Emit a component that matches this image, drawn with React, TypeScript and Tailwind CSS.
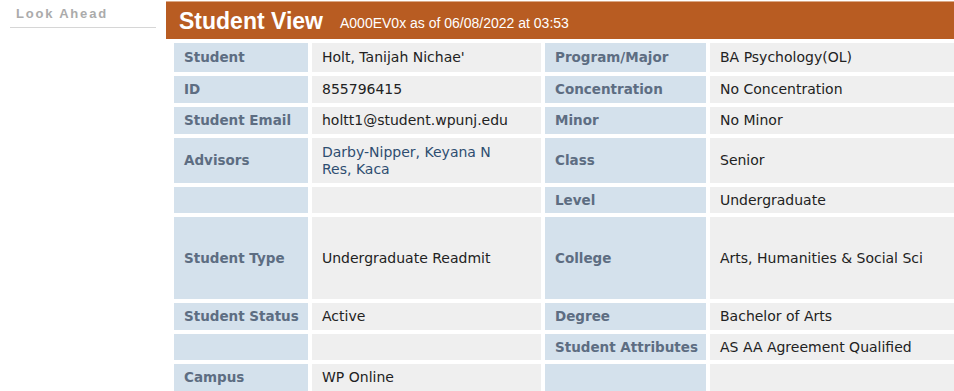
import React from "react";

type Cell = { label?: string; value?: React.ReactNode };
type Row = { cells: [Cell, Cell]; h?: string };

const rows: Row[] = [
  { cells: [{ label: "Student", value: "Holt, Tanijah Nichae'" }, { label: "Program/Major", value: "BA Psychology(OL)" }], h: "h-[29px]" },
  { cells: [{ label: "ID", value: "855796415" }, { label: "Concentration", value: "No Concentration" }], h: "h-[27px]" },
  { cells: [{ label: "Student Email", value: "holtt1@student.wpunj.edu" }, { label: "Minor", value: "No Minor" }], h: "h-[27px]" },
  {
    cells: [
      {
        label: "Advisors",
        value: (
          <span className="text-[#2e4d70]">
            Darby-Nipper, Keyana N
            <br />
            Res, Kaca
          </span>
        ),
      },
      { label: "Class", value: "Senior" },
    ],
    h: "h-[45px]",
  },
  { cells: [{}, { label: "Level", value: "Undergraduate" }], h: "h-[26px]" },
  { cells: [{ label: "Student Type", value: "Undergraduate Readmit" }, { label: "College", value: "Arts, Humanities & Social Sci" }], h: "h-[82px]" },
  { cells: [{ label: "Student Status", value: "Active" }, { label: "Degree", value: "Bachelor of Arts" }], h: "h-[27px]" },
  { cells: [{}, { label: "Student Attributes", value: "AS AA Agreement Qualified" }], h: "h-[26px]" },
  { cells: [{ label: "Campus", value: "WP Online" }, {}], h: "h-[27px]" },
];

export default function App() {
  return (
    <div className="w-[954px] h-[391px] overflow-hidden bg-white flex" style={{ fontFamily: '"DejaVu Sans", Verdana, sans-serif' }}>
      <div className="w-[166px] shrink-0 pl-[10px] pr-[10px]">
        <div
          className="pt-[8px] pb-[7px] pl-[6px] border-b border-[#d6d6d6] text-[13px] leading-[12px] font-bold tracking-[1.8px] text-[#ababab]"
          style={{ fontFamily: '"Liberation Sans", Arial, sans-serif' }}
        >
          Look Ahead
        </div>
      </div>
      <div className="flex-1 min-w-0">
        <div
          className="mt-[1px] h-[38px] border-t border-[#dba886] bg-[#b85c22] flex items-center pl-[13px] gap-[17px] text-white"
          style={{ fontFamily: '"Liberation Sans", Arial, sans-serif' }}
        >
          <span className="text-[23px] font-bold leading-none pt-[1px]">Student View</span>
          <span className="text-[14px] leading-none pt-[4px]">A000EV0x as of 06/08/2022 at 03:53</span>
        </div>
        <div className="pl-[8px] pt-[4px] grid grid-cols-[134px_229px_161px_1fr] gap-x-[4px] gap-y-[4px] leading-[17px]">
          {rows.map((r, i) => (
            <React.Fragment key={i}>
              {r.cells.map((c, j) => (
                <React.Fragment key={j}>
                  <div className={`${r.h} bg-[#d4e1ec] px-[10px] flex items-center font-bold text-[13.5px] text-[#5d6d82] whitespace-nowrap`}>{c.label}</div>
                  <div className={`${r.h} bg-[#efefef] px-[10px] flex items-center text-[14px] text-[#222222] whitespace-nowrap`}>{c.value}</div>
                </React.Fragment>
              ))}
            </React.Fragment>
          ))}
        </div>
      </div>
    </div>
  );
}
